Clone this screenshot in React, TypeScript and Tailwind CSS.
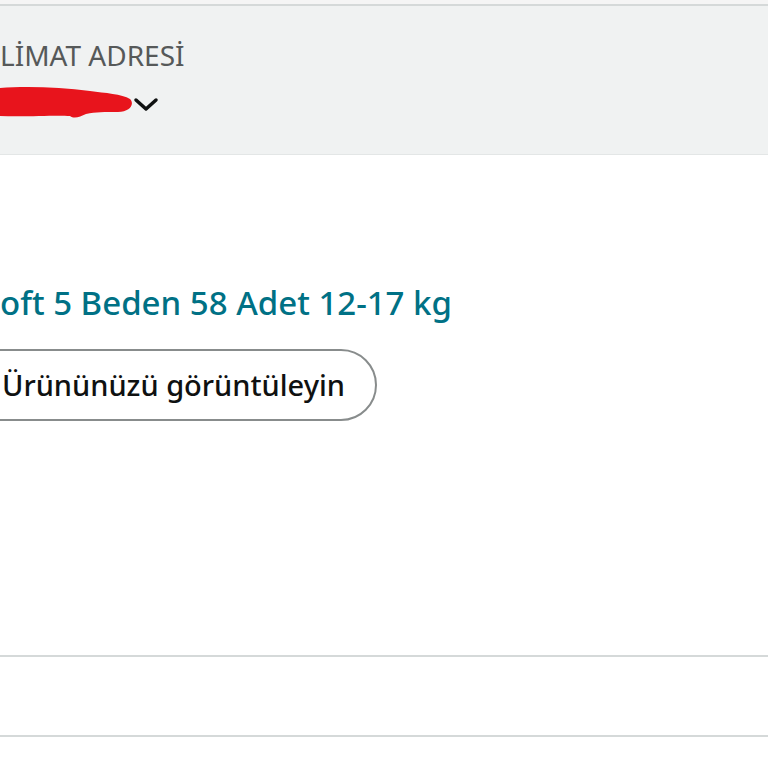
import React from "react";

function Scribble() {
  return (
    <svg width="134" height="34" viewBox="0 0 134 34" className="block">
      <path
        d="M0 3 C25 1 60 2 90 6 C105 8 122 9 130 14 C135 19 130 27 118 27 C104 27 96 27 86 29 C80 32 74 34 70 31 C55 30 25 32 0 31 Z"
        fill="#e8141c"
      />
    </svg>
  );
}

export default function App() {
  return (
    <div className="min-h-screen bg-white font-['Noto_Sans',sans-serif] overflow-hidden">
      <div className="h-[4px] bg-[#f5f5f5]" />

      {/* Delivery address bar */}
      <div className="h-[151px] border-t-2 border-b border-t-[#d5d9d9] border-b-[#e3e6e6] bg-[#f0f2f2] pt-[33px]">
        <p className="text-[28px] leading-[32px] text-[#565959] uppercase">LİMAT ADRESİ</p>
        <div className="mt-[14px] flex items-center">
          <Scribble />
          <svg width="30" height="20" viewBox="0 0 30 20" className="-ml-[2px] mt-[5px]">
            <path d="M4 5 L14 14 L24 5" fill="none" stroke="#0f1111" strokeWidth="3.5" strokeLinecap="round" strokeLinejoin="round" />
          </svg>
        </div>
      </div>

      {/* Product */}
      <div className="pt-[130px] h-[502px] border-b-2 border-[#d5d9d9]">
        <a className="block text-[33px] leading-[36px] font-medium text-[#007185]">oft 5 Beden 58 Adet 12-17 kg</a>
        <div className="mt-[28px] flex">
          <button className="-ml-[40px] h-[72px] pl-[40px] pr-[30px] rounded-full border-2 border-[#888c8c] bg-white text-[29px] font-medium text-[#0f1111]">
            Ürününüzü görüntüleyin
          </button>
        </div>
      </div>

      <div className="h-[80px] border-b-2 border-[#d5d9d9]" />
    </div>
  );
}
